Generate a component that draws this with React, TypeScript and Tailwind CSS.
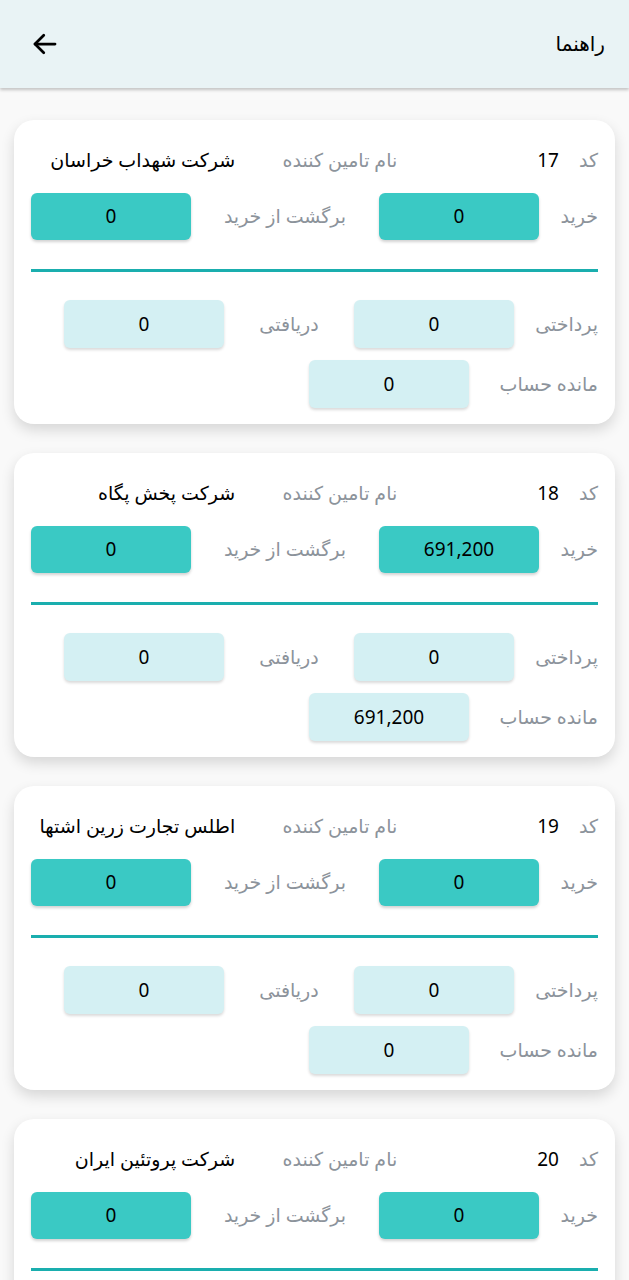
import React from "react";

type Card = { code: string; name: string; buy: string; ret: string; pay: string; rec: string; rem: string };

const cards: Card[] = [
  { code: "17", name: "شرکت شهداب خراسان", buy: "0", ret: "0", pay: "0", rec: "0", rem: "0" },
  { code: "18", name: "شرکت پخش پگاه", buy: "691,200", ret: "0", pay: "0", rec: "0", rem: "691,200" },
  { code: "19", name: "اطلس تجارت زرین اشتها", buy: "0", ret: "0", pay: "0", rec: "0", rem: "0" },
  { code: "20", name: "شرکت پروتئین ایران", buy: "0", ret: "0", pay: "0", rec: "0", rem: "0" },
];

const font = { fontFamily: '"Noto Sans", "DejaVu Sans", sans-serif' };

function DarkBox({ v }: { v: string }) {
  return (
    <div className="w-[160px] h-[47px] rounded-[6px] bg-[#3ac9c4] shadow-[0_2px_3px_rgba(0,0,0,0.18)] flex items-center justify-center text-[19px] text-black">
      {v}
    </div>
  );
}

function LightBox({ v }: { v: string }) {
  return (
    <div className="w-[160px] h-[48px] rounded-[6px] bg-[#d4f0f3] shadow-[0_2px_3px_rgba(0,0,0,0.15)] flex items-center justify-center text-[19px] text-black">
      {v}
    </div>
  );
}

function CardView({ c }: { c: Card }) {
  return (
    <div className="bg-white rounded-[20px] shadow-[0_6px_14px_rgba(0,0,0,0.14)] h-[304px] px-[17px] pt-[25px]">
      <div className="flex items-center h-[30px] text-[19px]">
        <span className="text-[#8c939b]">کد</span>
        <span className="text-black mr-[20px]">{c.code}</span>
        <span className="text-[#8c939b] mr-[140px] w-[132px] text-right">نام تامین کننده</span>
        <span className="text-black mr-[30px]">{c.name}</span>
      </div>
      <div className="flex items-center mt-[18px] text-[19px]">
        <span className="w-[59px] text-[#8c939b]">خرید</span>
        <DarkBox v={c.buy} />
        <span className="flex-1 text-center text-[#8c939b]">برگشت از خرید</span>
        <DarkBox v={c.ret} />
      </div>
      <div className="mt-[29px] h-[3px] bg-[#1aaeae]" />
      <div className="flex items-center mt-[28px] text-[19px]">
        <span className="w-[84px] text-[#8c939b]">پرداختی</span>
        <LightBox v={c.pay} />
        <span className="w-[130px] text-center text-[#8c939b]">دریافتی</span>
        <LightBox v={c.rec} />
      </div>
      <div className="flex items-center mt-[12px] text-[19px]">
        <span className="w-[129px] text-[#8c939b]">مانده حساب</span>
        <LightBox v={c.rem} />
      </div>
    </div>
  );
}

export default function App() {
  return (
    <div dir="rtl" style={font} className="w-[629px] h-[1280px] overflow-hidden bg-[#f9f9f9]">
      <div className="h-[88px] bg-[#e9f3f5] shadow-[0_2px_3px_rgba(0,0,0,0.22)] flex items-center justify-between pr-[24px] pl-[30px] relative z-10">
        <span className="text-[20px] text-black">راهنما</span>
        <svg width="30" height="30" viewBox="0 0 24 24" fill="none" stroke="black" strokeWidth="2.2" strokeLinecap="round" strokeLinejoin="round">
          <path d="M20 12H4" />
          <path d="M11 5l-7 7 7 7" />
        </svg>
      </div>
      <div className="px-[14px] pt-[32px] flex flex-col gap-[29px]">
        {cards.map((c) => (
          <CardView key={c.code} c={c} />
        ))}
      </div>
    </div>
  );
}
